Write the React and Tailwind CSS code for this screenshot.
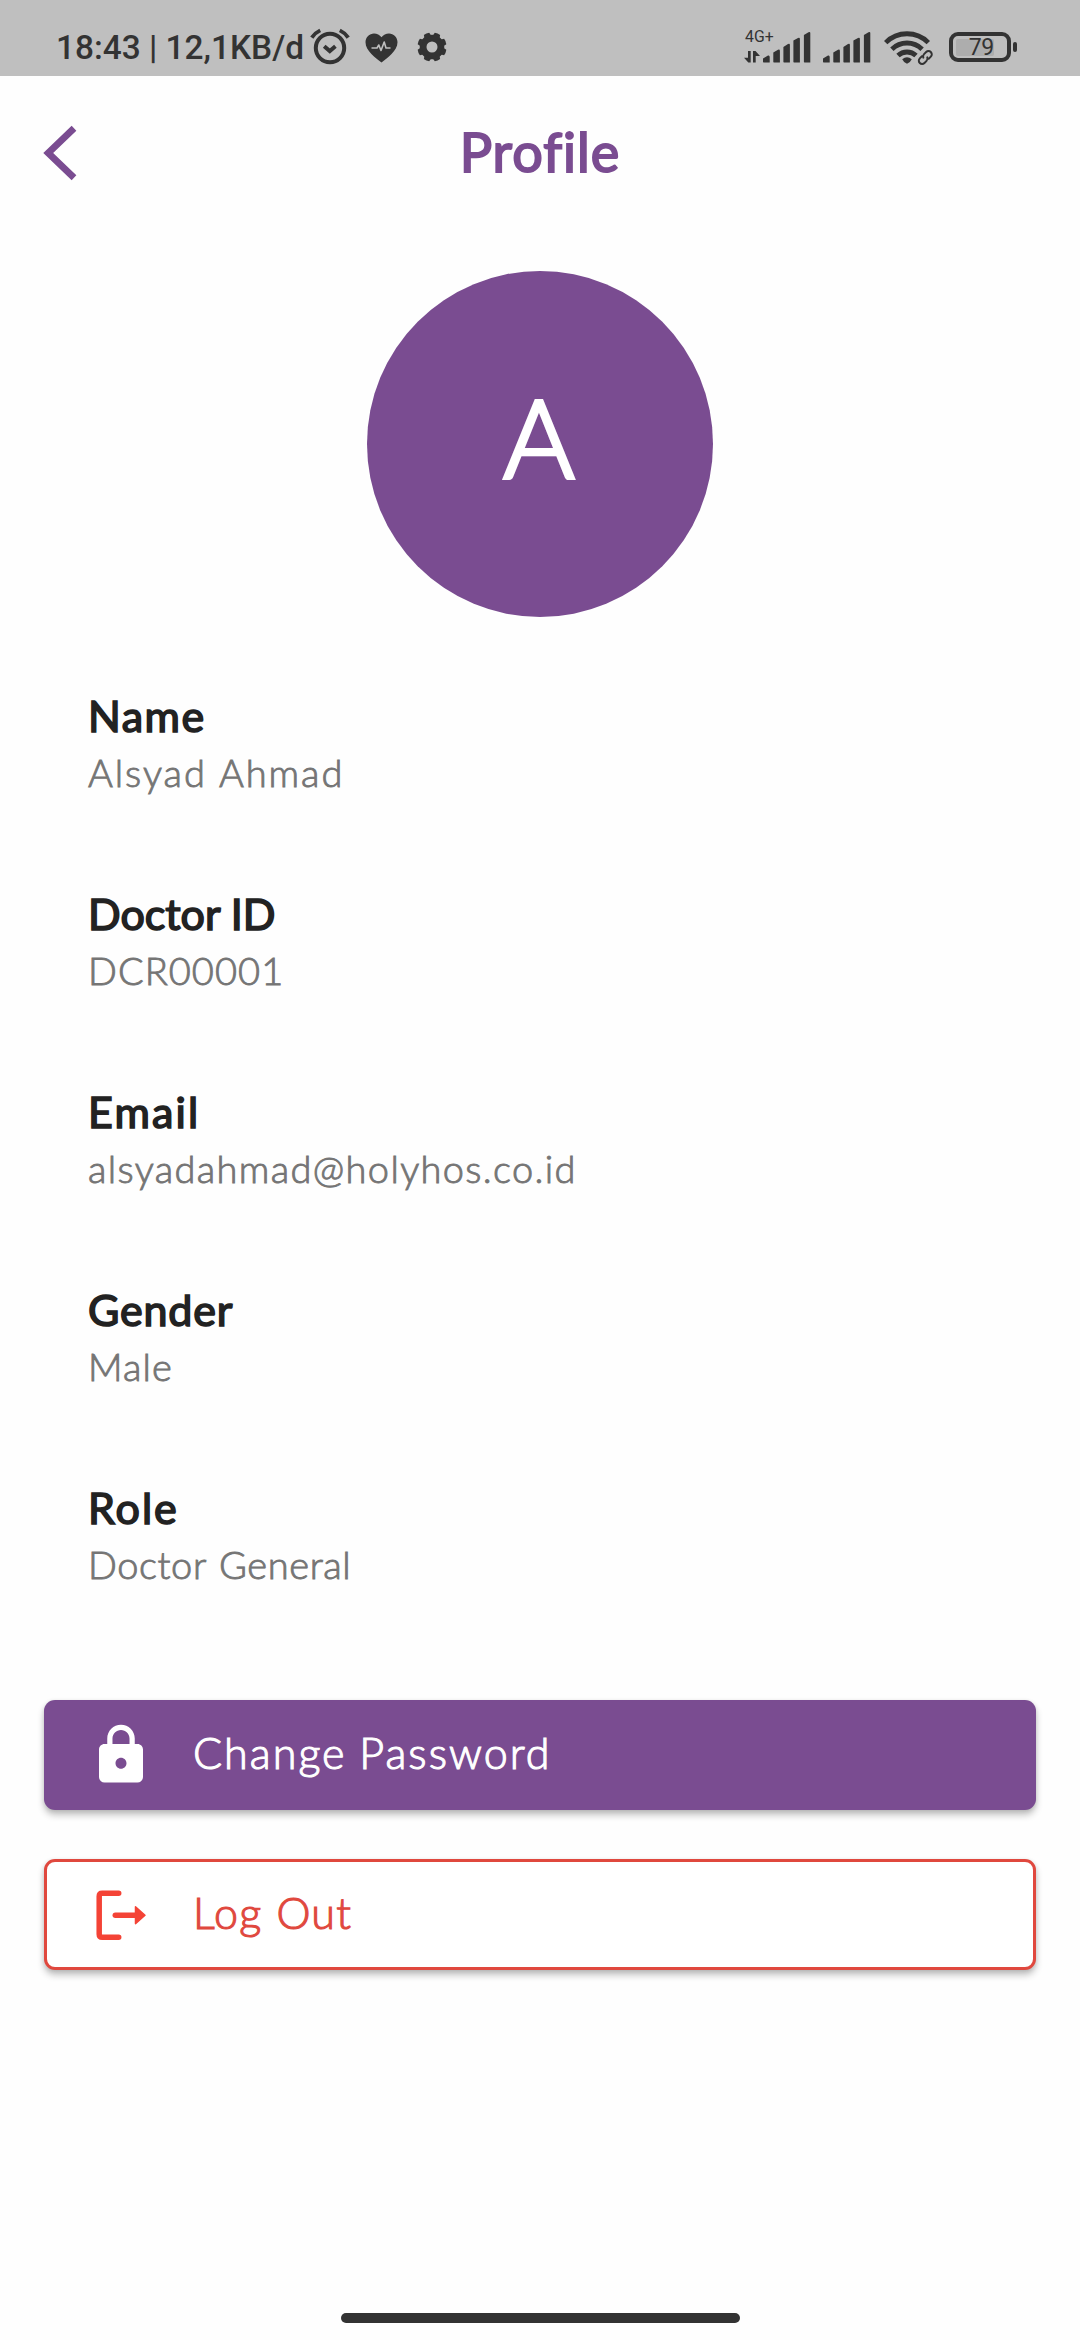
import React from "react";

const fields = [
  { label: "Name", value: "Alsyad Ahmad", labelFit: "tracking-[1.5px]", valueFit: "tracking-[1.97px] [word-spacing:1px]" },
  { label: "Doctor ID", value: "DCR00001", labelFit: "tracking-[0px]", valueFit: "tracking-[1.05px]" },
  { label: "Email", value: "alsyadahmad@holyhos.co.id", labelFit: "tracking-[2.2px]", valueFit: "tracking-[1.35px]" },
  { label: "Gender", value: "Male", labelFit: "tracking-[0.8px]", valueFit: "tracking-[1.1px]" },
  { label: "Role", value: "Doctor General", labelFit: "tracking-[2px]", valueFit: "tracking-[0.6px] [word-spacing:2px]" },
];

function AlarmIcon() {
  return (
    <svg className="h-[40px] w-[40px]" viewBox="0 0 40 40" fill="none" stroke="currentColor">
      <circle cx="20" cy="22" r="14.2" strokeWidth="4" />
      <path d="M14.2 20.2l5.6 4.8 5.6-4.8" strokeWidth="4" />
      <path d="M1.8 11.6C3.8 8.6 6.8 6 10.2 4.4M38.2 11.6c-2-3-5-5.6-8.400-7.200" strokeWidth="3.8" />
    </svg>
  );
}

function HeartIcon() {
  return (
    <svg className="h-[30px] w-[33px]" viewBox="0 0 33 30">
      <path fill="currentColor" d="M16.500 29.500C11 25 0.500 18 0.500 9.200C0.500 4 4.500 0.400 9 0.400c3 0 5.800 1.400 7.500 3.800C18.200 1.800 21 0.400 24 0.400c4.500 0 8.500 3.600 8.500 8.800C32.500 18 22 25 16.500 29.500z" />
      <path fill="none" stroke="#bfbfbf" strokeWidth="1.600" strokeLinejoin="round" d="M6.500 15h5.500l1.800-3 2.200 5.500 3.200-8.500 1.800 6h4.500" />
    </svg>
  );
}

const teeth = [0, 45, 90, 135, 180, 225, 270, 315];

function GearIcon() {
  return (
    <svg className="h-[30px] w-[30px]" viewBox="0 0 30 30" fill="currentColor">
      <circle cx="15" cy="15" r="8.900" fill="none" stroke="currentColor" strokeWidth="6.800" />
      {teeth.map((angle) => (
        <path key={angle} d="M11.200 5l0.900-4.300q2.900-.8 5.800 0L18.800 5z" transform={`rotate(${angle + 22.5} 15 15)`} />
      ))}
    </svg>
  );
}

function SignalIcon() {
  return (
    <svg className="h-[32px] w-[48px]" viewBox="0 0 48 32" fill="currentColor">
      <path d="M0 31V27.500L5 24.500Q6.700 24 6.700 26V31.500H0.500zM10.300 31V21.500L15 18.800Q16.900 18 16.900 20V31.500H10.800zM20.400 31V16L25 13Q26.900 12 26.900 14V31.500H20.900zM30.400 31V9.500L35 7Q36.900 6.200 36.900 8V31.500H30.900zM40.900 31V4L45.500 1.200Q47.300 0.300 47.300 2V31.500H41.400z" />
    </svg>
  );
}

function DataArrowsIcon() {
  return (
    <svg className="h-[12px] w-[16px]" viewBox="0 0 16 12" fill="currentColor">
      <path d="M4 0h2.700v11.500H4.300L0 6.800h4zM9 11.500h2.700V5H16L11.500 0H9z" />
    </svg>
  );
}

function WifiIcon() {
  return (
    <svg className="h-[36px] w-[50px]" viewBox="0 0 50 36" fill="none" stroke="currentColor">
      <path d="M1.700 12.600A30 30 0 0 1 44.300 12.600" strokeWidth="4.800" />
      <path d="M7.900 19.200A21.500 21.500 0 0 1 38.100 19.200" strokeWidth="4.800" />
      <path d="M14 25.600A13 13 0 0 1 32 25.600" strokeWidth="4.800" />
      <path d="M18.200 29.200Q23 25.200 27.800 29.200Q27 31.500 23 33.800Q19 31.500 18.200 29.200z" fill="currentColor" stroke="none" />
      <g transform="translate(41.300 27.500) rotate(-45)" strokeWidth="2" strokeLinecap="round">
        <path d="M-1.500-3.300H-4.500a3.300 3.300 0 0 0 0 6.600H-1.500a3.300 3.300 0 0 0 3-2" />
        <path d="M1.500 3.300H4.500a3.300 3.300 0 0 0 0-6.600H1.500a3.300 3.300 0 0 0-3 2" />
      </g>
    </svg>
  );
}

function Battery() {
  return (
    <div className="flex items-center gap-[2px]">
      <div className="flex h-[30px] w-[62px] items-center rounded-[9px] border-4 border-[#333] pl-[3px]">
        <div className="flex h-[17px] w-[38px] items-center justify-end rounded-[2px] bg-[#adadad]">
          <span className="text-[23px] leading-none tracking-[-0.3px]">79</span>
        </div>
      </div>
      <div className="h-[10px] w-[4px] rounded-[2px] bg-[#333]" />
    </div>
  );
}

function StatusBar() {
  return (
    <div className="flex h-[76px] items-start justify-between bg-[#bfbfbf] pr-[63px] pl-[56px] font-[Roboto,sans-serif] text-[#333]">
      <div className="flex items-start">
        <span className="mt-[28px] w-[254px] text-[33.4px] leading-[40px] font-medium whitespace-nowrap">18:43 | 12,1KB/d</span>
        <div className="mt-[26px]"><AlarmIcon /></div>
        <div className="mt-[33px] ml-[15px]"><HeartIcon /></div>
        <div className="mt-[32px] ml-[18.500px]"><GearIcon /></div>
      </div>
      <div className="flex items-start">
        <div className="mt-[29px] flex w-[19px] flex-col gap-[6px]">
          <span className="pl-[1px] text-[15.800px] leading-[16px] whitespace-nowrap">4G+</span>
          <DataArrowsIcon />
        </div>
        <div className="mt-[31px]"><SignalIcon /></div>
        <div className="mt-[31px] ml-[12px]"><SignalIcon /></div>
        <div className="mt-[30px] ml-[13px]"><WifiIcon /></div>
        <div className="mt-[32px] ml-[15px]"><Battery /></div>
      </div>
    </div>
  );
}

function LockIcon() {
  return (
    <svg className="h-[66px] w-[66px]" viewBox="0 0 24 24" fill="currentColor">
      <path d="M18 8h-1V6c0-2.760-2.240-5-5-5S7 3.240 7 6v2H6c-1.100 0-2 .9-2 2v10c0 1.100.9 2 2 2h12c1.100 0 2-.9 2-2V10c0-1.100-.9-2-2-2zm-6 9c-1.100 0-2-.9-2-2s.9-2 2-2 2 .9 2 2-.9 2-2 2zm3.100-9H8.900V6c0-1.710 1.390-3.100 3.100-3.100 1.710 0 3.100 1.390 3.100 3.100v2z" />
    </svg>
  );
}

function LogoutIcon() {
  return (
    <svg className="h-[66px] w-[66px]" viewBox="0 0 66 66" fill="none" stroke="#f44336" strokeWidth="5.500" strokeLinecap="round">
      <path d="M30.700 11.200H14.200Q11.200 11.200 11.200 14.200V52.200Q11.200 55.200 14.200 55.200H30.700" />
      <path d="M27.300 33.200H47" />
      <path d="M47.500 24.800L57 33.200L47.500 41.600z" fill="#f44336" strokeWidth="1.500" strokeLinejoin="round" />
    </svg>
  );
}

export default function App() {
  return (
    <div className="flex h-[2340px] w-[1080px] flex-col bg-[#fefefe] font-[Lato,sans-serif]">
      <StatusBar />

      <header className="grid h-[154px] grid-cols-[1fr_auto_1fr] items-center px-[43px] text-[#7a4c91]">
        <svg className="h-[56px] w-[36px]" viewBox="0 0 36 56" fill="none" stroke="currentColor" strokeWidth="6.800">
          <path d="M31 3.200L5.200 28L31 52.800" />
        </svg>
        <h1 className="pb-[2px] text-[54px] leading-[64px] font-normal tracking-[1px] [-webkit-text-stroke:1.900px_#7a4c91]">Profile</h1>
      </header>

      <div className="mt-[40.500px] flex h-[346px] w-[346px] items-center justify-center self-center rounded-full bg-[#7a4c91] pr-[2px] pb-[15px] text-[108px] leading-[132px] font-light text-white [-webkit-text-stroke:4px_white]">
        A
      </div>

      <main className="mt-[70.500px] flex flex-col gap-[87px] px-[88px]">
        {fields.map((f) => (
          <section key={f.label} className="flex flex-col gap-[2px] whitespace-nowrap">
            <h2 className={`pt-[1px] text-[43px] leading-[56px] font-normal text-[#222] [-webkit-text-stroke:1.600px_#222] ${f.labelFit}`}>{f.label}</h2>
            <p className={`text-[38px] leading-[52px] font-light text-[#757575] [-webkit-text-stroke:0.900px_#757575] ${f.valueFit}`}>{f.value}</p>
          </section>
        ))}
      </main>

      <div className="mt-[110px] flex flex-col gap-[49px] px-[44px]">
        <button className="flex h-[110px] items-center rounded-[11px] bg-[#7a4c91] pb-[1px] pl-[44px] text-white shadow-[0_5px_7px_rgba(0,0,0,0.240),0_1px_4px_rgba(0,0,0,0.100)]">
          <LockIcon />
          <span className="ml-[39px] pb-[3px] text-[43px] leading-[52px] font-light tracking-[2.050px] [word-spacing:-1px] [-webkit-text-stroke:1.100px_white]">Change Password</span>
        </button>
        <button className="flex h-[111px] items-center rounded-[11px] border-[3px] border-[#e0483e] bg-white pl-[41px] text-[#e0483e] shadow-[0_5px_7px_rgba(0,0,0,0.240),0_1px_4px_rgba(0,0,0,0.100)]">
          <LogoutIcon />
          <span className="ml-[39px] pb-[4px] text-[43px] leading-[52px] font-light tracking-[1.300px] [word-spacing:1px] [-webkit-text-stroke:1.100px_#e0483e]">Log Out</span>
        </button>
      </div>

      <div className="mt-auto mb-[17px] h-[10px] w-[399px] self-center rounded-full bg-[#333]" />
    </div>
  );
}
